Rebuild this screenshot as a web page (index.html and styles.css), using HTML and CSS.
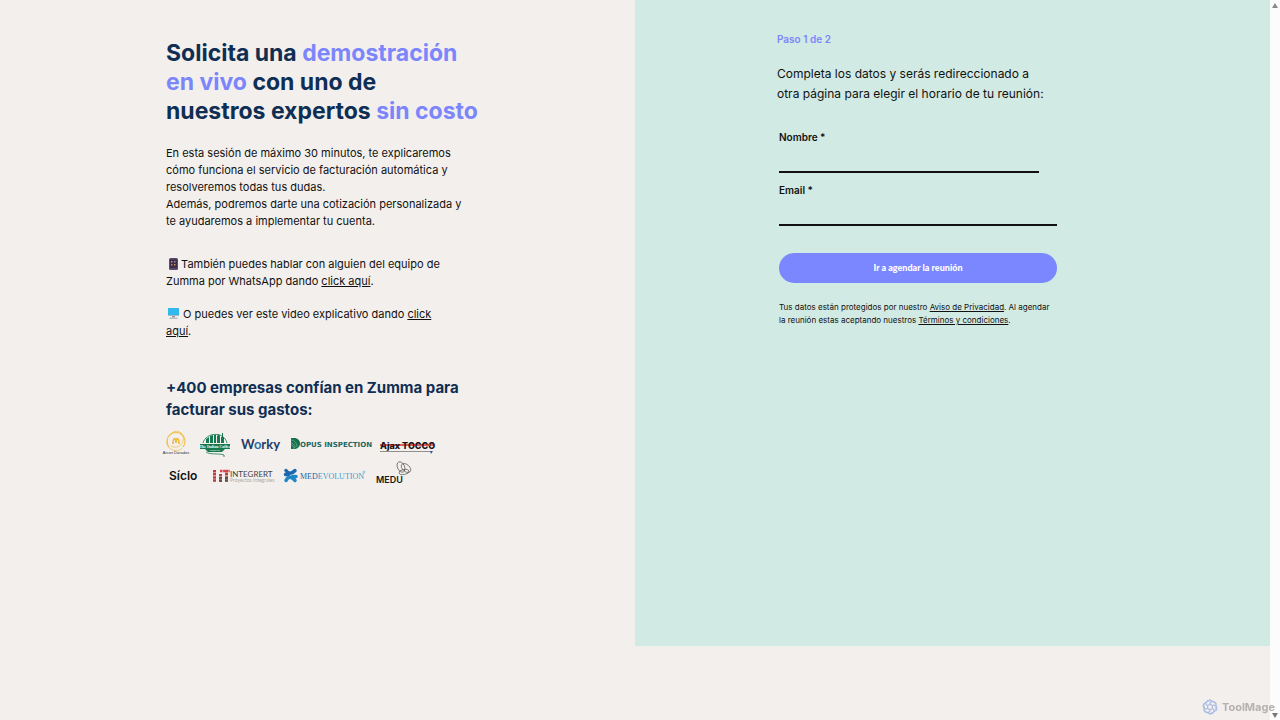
FILE: index.html
```html
<!DOCTYPE html>
<html lang="es">
<head>
<meta charset="utf-8">
<meta name="viewport" content="width=device-width, initial-scale=1">
<title>Zumma – Solicita una demostración</title>
<link rel="stylesheet" href="styles.css">
</head>
<body>
<div class="page">
  <main class="columns">
    <section class="intro">
      <h1 class="title">Solicita una <span class="accent">demostración<br>en vivo</span> con uno de<br>nuestros expertos <span class="accent">sin costo</span></h1>
      <p class="text">En esta sesión de máximo 30 minutos, te explicaremos<br>cómo funciona el servicio de facturación automática y<br>resolveremos todas tus dudas.<br>Además, podremos darte una cotización personalizada y<br>te ayudaremos a implementar tu cuenta.</p>
      <p class="text text-whatsapp"><svg class="emoji" viewBox="0 0 12 12" aria-hidden="true"><rect x="3" y="0" width="9" height="12" rx="1.500" fill="#5c4a6e"/><rect x="4" y="1.500" width="7" height="8.500" fill="#3b2d45"/><path d="M5 3h1.500v1.500H5zM8 6h1.500v1.500H8z" fill="#d98e52"/><path d="M8 3h1.500v1.500H8zM5 6h1.500v1.500H5z" fill="#9a86c0"/></svg> También puedes hablar con alguien del equipo de<br>Zumma por WhatsApp dando <a class="link" href="#">click aquí</a>.</p>
      <p class="text text-video"><svg class="emoji emoji-wide" viewBox="0 0 14 12" aria-hidden="true"><rect x="2" y="0" width="11" height="8" rx=".6" fill="#2fb9ee"/><path d="M2 7h11v1H2z" fill="#a9bcc4"/><path d="M6 8h3v1.500H6z" fill="#8d989e"/><path d="M4 9.500h7l1 1.500H3z" fill="#b7bcc0"/></svg> O puedes ver este video explicativo dando <a class="link" href="#">click<br>aquí</a>.</p>
      <h2 class="subtitle">+400 empresas confían en Zumma para<br>facturar sus gastos:</h2>
      <div class="logos">
        <svg class="logo" width="26" height="26" viewBox="0 0 26 26" role="img" aria-label="Arcos Dorados"><g fill="none" stroke="#f0c24e"><path d="M6 16A9 9 0 1 1 20 16" stroke-width="1.200"/><path d="M4.500 9A9 8 0 0 0 19 17.500M7 4.500A7 7 0 0 1 20 10A8 8 0 0 1 8 15" stroke-width=".8"/><path d="M10 13C10 6 13 6 13 12C13 6 16 6 16 13" stroke="#efb42f" stroke-width="1.500"/></g><text class="logo-sans" x="13" y="23" font-size="4" text-anchor="middle" fill="#333">Arcos Dorados</text></svg>
        <svg class="logo" width="32" height="26" viewBox="0 0 32 26" role="img" aria-label="The Italian Coffee Company"><g fill="#16794f"><path d="M7 12V8l3-2v6zM11 12V5l3-1v8zM15 12V4h2v8zM18 12V5l2-2 1 2v7z"/><path d="M22 12V6h1V2h1v4h1v6z"/><path d="M1 13h30v5H1z"/><path d="M6 18h20l-3 3H9z"/></g><path d="M4 12C7 1 25 0 28 12M7 21c4 3 13 1 18 3v2" fill="none" stroke="#16794f" stroke-width=".8"/><text class="logo-serif" x="16" y="17" font-size="4" text-anchor="middle" fill="#fff">The Italian Coffee</text><text class="logo-serif" x="16" y="20" font-size="2" text-anchor="middle" fill="#fff">COMPANY</text></svg>
        <svg class="logo" width="39" height="18" viewBox="0 0 39 18" role="img" aria-label="Worky"><text class="logo-worky" x="0" y="14" font-size="13" fill="#1f3c66">W<tspan fill="#2c6ea8">o</tspan>rky</text></svg>
        <svg class="logo" width="80" height="16" viewBox="0 0 80 16" role="img" aria-label="Opus Inspection"><path d="M1 2h3c8 0 8 11 0 11H1z" fill="#16704f"/><path d="M1 4c4 0 6 4 6 7M1 7c3 0 4 3 4 5M1 9c2 0 3 2 3 4" fill="none" stroke="#78b59b" stroke-width=".7"/><text class="logo-wide" x="10" y="11" font-size="7" fill="#24665f">OPUS INSPECTION</text></svg>
        <svg class="logo" width="54" height="16" viewBox="0 0 54 16" role="img" aria-label="Ajax Tocco"><path d="M0 9h54" stroke="#d92f2c" stroke-width="1.500"/><text class="logo-black" x="0" y="13" font-size="9" fill="#171214">Ajax TOCCO</text><path d="M0 15.500h52" stroke="#777" stroke-width=".8"/><path d="M50 15h3l-2 3z" fill="#384fa0"/><path d="M3 8h1.500v2H3zM34 8h1.500v2H34zM49 8h1.500v2H49z" fill="#d92f2c"/></svg>
      </div>
      <div class="logos logos-second">
        <svg class="logo" width="32" height="18" viewBox="0 0 32 18" role="img" aria-label="Síclo"><text class="logo-siclo" x="0" y="14" font-size="12" fill="#111">Síclo</text></svg>
        <svg class="logo" width="58" height="18" viewBox="0 0 58 18" role="img" aria-label="Integrert Proyectos Integrales"><path d="M1.500 4v12M7.500 8v8M13.500 4v12" stroke="#bc3d42" stroke-width="3" stroke-dasharray="2.500 .6"/><path d="M7 5h10" stroke="#d4494d" stroke-width="2.500" stroke-dasharray="2.500 .6"/><path d="M7.500 11v5M13.500 11v5" stroke="#555" stroke-width="3" stroke-dasharray="2 .6"/><text class="logo-light" x="17" y="11" font-size="8" fill="#444">INTEGRERT</text><text class="logo-light" x="17" y="16" font-size="5" fill="#aaa">Proyectos Integrales</text></svg>
        <svg class="logo" width="81" height="18" viewBox="0 0 81 18" role="img" aria-label="Medevolution"><g fill="none" stroke-width="3.500" stroke-linecap="round"><path d="M3 4.500C5 8 9 8 12 4.500M2.500 8.500h3" stroke="#1b68ae"/><path d="M3 14.500C5 10 9 10 12 14.500M9.500 10.500h3.500" stroke="#2186c6"/></g><text class="logo-med" x="17" y="13" font-size="8" fill="#26649f">MED<tspan fill="#3b9dce">EVOLUTION</tspan></text><circle cx="81" cy="6" r="1" fill="none" stroke="#3b9dce" stroke-width=".5"/></svg>
        <svg class="logo" width="36" height="24" viewBox="0 0 36 24" role="img" aria-label="Medu"><g fill="none" stroke="#555" stroke-width=".7"><ellipse cx="25" cy="7" rx="3.500" ry="5.500" transform="rotate(-25 25 7)"/><ellipse cx="30" cy="8" rx="3.500" ry="5.500" transform="rotate(-50 30 8)"/><ellipse cx="28" cy="12" rx="5" ry="2.500" transform="rotate(-10 28 12)"/></g><text class="logo-siclo" x="0" y="23" font-size="9" fill="#161616">MEDU</text></svg>
      </div>
    </section>
    <section class="booking">
      <p class="step">Paso 1 de 2</p>
      <p class="lead">Completa los datos y serás redireccionado a<br>otra página para elegir el horario de tu reunión:</p>
      <form class="form">
        <label class="label" for="nombre">Nombre *</label>
        <input class="field field-short" id="nombre" type="text" required>
        <label class="label" for="email">Email *</label>
        <input class="field" id="email" type="email" required>
        <button class="submit" type="submit">Ir a agendar la reunión</button>
        <p class="legal">Tus datos están protegidos por nuestro <a class="link" href="#">Aviso de Privacidad</a>. Al agendar<br>la reunión estas aceptando nuestros <a class="link" href="#">Términos y condiciones</a>.</p>
      </form>
    </section>
  </main>
  <div class="scrollbar" aria-hidden="true"><span class="arrow arrow-up"></span><span class="arrow arrow-down"></span></div>
</div>
<div class="watermark"><svg width="16" height="16" viewBox="0 0 16 16" fill="none" stroke="#a9bce6" stroke-width="1.200" aria-hidden="true"><path d="M8 1l6 3.500v7L8 15l-6-3.500v-7z"/><g><path id="petal" d="M8 5c0-3 4-4 6-.5"/><use href="#petal" transform="rotate(60 8 8)"/><use href="#petal" transform="rotate(120 8 8)"/><use href="#petal" transform="rotate(180 8 8)"/><use href="#petal" transform="rotate(240 8 8)"/><use href="#petal" transform="rotate(300 8 8)"/></g><circle cx="8" cy="8" r="2.500"/></svg><span>ToolMage</span></div>
</body>
</html>
```
FILE: styles.css
```css
* { box-sizing: border-box; }
body { margin: 0; background: #f3efec; color: #111; font-family: Inter, "Liberation Sans", sans-serif; }
h1, h2, p { margin: 0; }
.page { display: flex; min-height: 100vh; }
.columns { flex: 1; display: grid; grid-template-columns: 1fr 1fr; align-items: start; }
.intro { padding: 39px 0 32px 166px; white-space: nowrap; }
.title { color: #0f2e53; font-size: 23px; line-height: 29px; font-weight: 700; }
.accent { color: #7c86fb; }
.text { margin-top: 19px; font-size: 11px; line-height: 17px; }
.text-whatsapp { margin-top: 26px; }
.text-video { margin-top: 16px; }
.link { color: inherit; text-decoration: underline; }
.emoji { width: 12px; height: 12px; vertical-align: -2px; }
.emoji-wide { width: 14px; }
.subtitle { margin-top: 37px; color: #0f2e53; font-size: 15px; line-height: 22px; font-weight: 700; }
.logos { display: flex; align-items: center; gap: 10px; margin: 10px 0 0 -3px; }
.logos-second { align-items: flex-end; gap: 12px; margin: 3px 0 0 3px; }
.logo { flex: none; overflow: visible; }
.logo-sans { font-family: "Liberation Sans", sans-serif; }
.logo-serif { font-family: "Liberation Serif", serif; font-weight: 700; }
.logo-med { font-family: "Liberation Serif", serif; }
.logo-worky { font-family: Lato, sans-serif; font-weight: 700; }
.logo-siclo { font-family: Inter, sans-serif; font-weight: 600; }
.logo-wide { font-family: "DejaVu Sans", sans-serif; font-weight: 700; }
.logo-black { font-family: Inter, sans-serif; font-weight: 800; }
.logo-light { font-family: Lato, sans-serif; }
.booking { min-height: calc(100vh - 74px); padding: 31px 32px 32px 142px; background: #d1eae3; }
.step { color: #7c86fb; font-size: 10px; line-height: 16px; font-weight: 600; }
.lead { margin-top: 17px; font-size: 12px; line-height: 20px; white-space: nowrap; }
.form { display: flex; flex-direction: column; width: 100%; max-width: 280px; margin-top: 25px; padding-left: 2px; }
.label { font-size: 10px; line-height: 16px; font-weight: 600; }
.field { width: 100%; height: 28px; margin-bottom: 9px; padding: 4px 0; border: 0; border-bottom: 2px solid #111; border-radius: 0; background: transparent; font: 11px Inter, sans-serif; outline: 0; }
.field-short { width: 260px; }
.submit { height: 30px; margin-top: 18px; padding-bottom: 3px; border: 0; border-radius: 15px; background: #7b87ff; color: #fff; font: 900 9px Lato, sans-serif; }
.legal { margin-top: 18px; font-size: 8px; line-height: 13px; white-space: nowrap; }
.scrollbar { flex: none; display: flex; flex-direction: column; justify-content: space-between; align-items: center; width: 10px; padding: 3px 0 2px; background: #fcfcfc; }
.arrow { border: 3px solid transparent; }
.arrow-up { border-top: 0; border-bottom: 5px solid #8b8b8b; }
.arrow-down { border-bottom: 0; border-top: 5px solid #777; }
.watermark { position: fixed; right: 5px; bottom: 4px; display: flex; align-items: center; gap: 4px; color: #b5b1af; font: 700 11px/18px Inter, sans-serif; }
```
